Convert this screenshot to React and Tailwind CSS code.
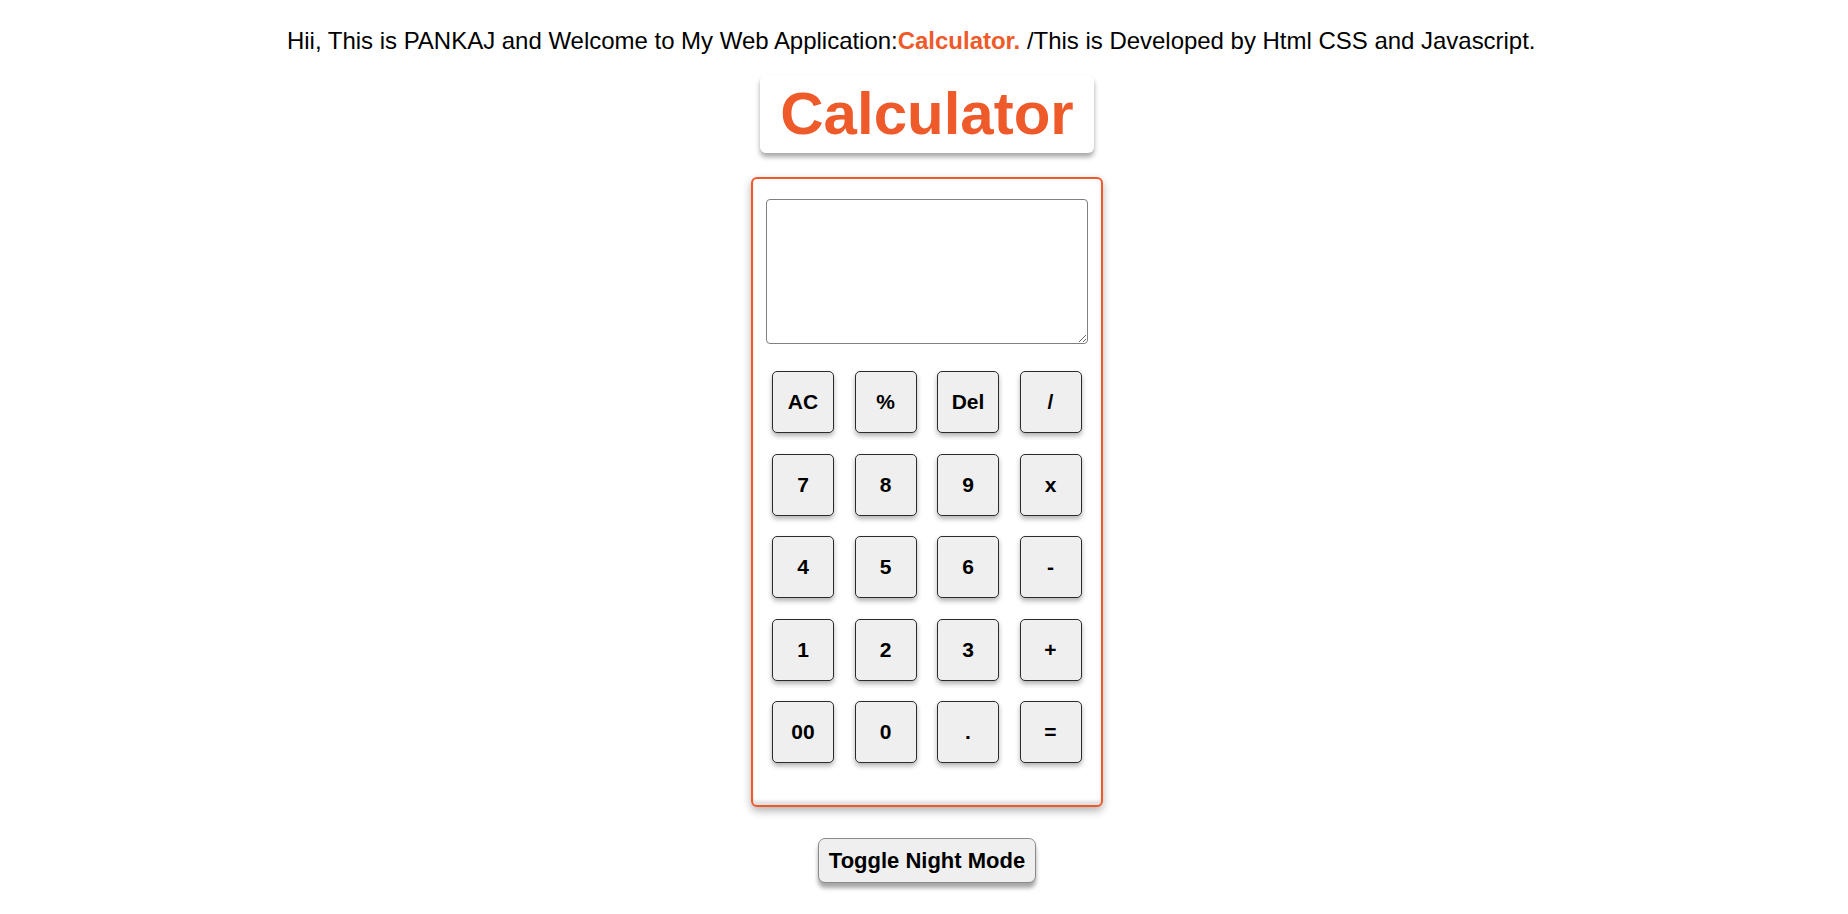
import React, { useState } from "react";

const keys = ["AC", "%", "Del", "/", "7", "8", "9", "x", "4", "5", "6", "-", "1", "2", "3", "+", "00", "0", ".", "="];

function App() {
  const [value, setValue] = useState("");

  return (
    <div className="min-h-screen bg-white text-black font-['Liberation_Sans',Arial,sans-serif]">
      <div className="pt-[27px] pl-[287px] text-[24px] leading-[27px] tracking-[-0.02px] whitespace-nowrap">
        Hii, This is PANKAJ and Welcome to My Web Application:
        <span className="font-bold text-[#ee5a2a]">Calculator.</span> /This is Developed by Html CSS and Javascript.
      </div>

      <div className="flex flex-col items-center pl-[6px]">
        <h1 className="mt-[21px] w-[334px] h-[78px] flex items-center justify-center bg-white rounded-[6px] text-[60px] font-bold text-[#ee5a2a] shadow-[0_4px_5px_rgba(0,0,0,0.35)]">
          Calculator
        </h1>

        <div className="mt-[24px] w-[352px] h-[630px] border-2 border-[#ee5a2a] rounded-[6px] bg-white px-[13px] pt-[20px] shadow-[inset_0_-4px_3px_rgba(0,0,0,0.12),0_4px_8px_rgba(0,0,0,0.3)]">
          <textarea
            value={value}
            onChange={(e) => setValue(e.target.value)}
            className="block w-[322px] h-[145px] border border-[#808080] rounded-[4px] bg-white outline-none"
          />
          <div className="mt-[27px] ml-[6px] grid grid-cols-[repeat(4,62px)] gap-x-[20.5px] gap-y-[20.5px]">
            {keys.map((k) => (
              <button
                key={k}
                className="w-[62px] h-[62px] bg-[#efefef] border border-[#2b2b2b] rounded-[5px] text-[21px] font-bold text-black shadow-[0_3px_5px_rgba(0,0,0,0.3)] flex items-center justify-center"
              >
                {k}
              </button>
            ))}
          </div>
        </div>

        <button className="mt-[31px] px-[10px] py-[9px] bg-[#efefef] border border-[#8a8a8a] rounded-[7px] text-[22px] leading-[25px] font-bold text-black shadow-[0_5px_4px_rgba(0,0,0,0.35)]">
          Toggle Night Mode
        </button>
      </div>
    </div>
  );
}

export default App;
